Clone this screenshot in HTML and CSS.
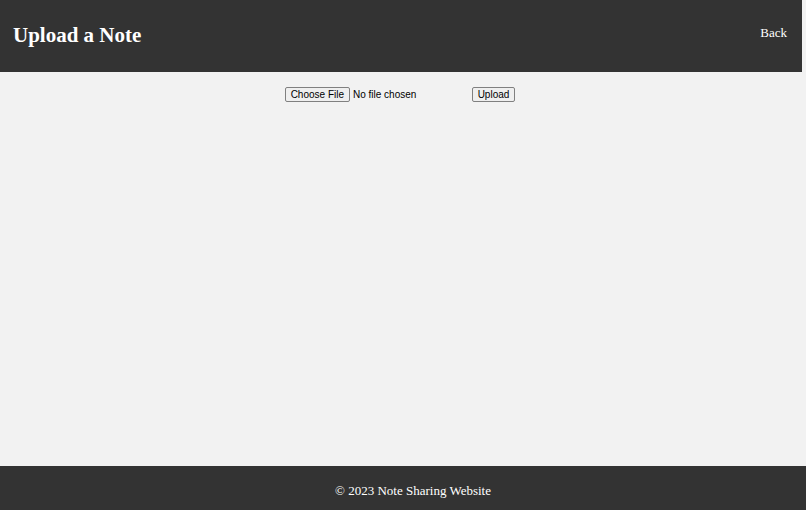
FILE: index.html
```html
<!DOCTYPE html>
<html lang="en">
<head>
	<meta charset="UTF-8">
	<title>Upload a Note</title>
	<link rel="stylesheet" href="styles.css">
</head>
<body>
	<header class="top">
		<h1>Upload a Note</h1>
		<a href="#" class="back">Back</a>
	</header>
	<main class="content">
		<form class="upload" action="#" method="post" enctype="multipart/form-data">
			<input type="file" name="note">
			<button type="submit">Upload</button>
		</form>
	</main>
	<footer class="bottom">
		<p>&copy; 2023 Note Sharing Website</p>
	</footer>
</body>
</html>
```

FILE: styles.css
```css
* {
    margin: 0;
    padding: 0;
    box-sizing: border-box;
}
html, body {
    height: 100%;
}
body {
    display: flex;
    flex-direction: column;
    background: #f2f2f2;
    font-family: "Liberation Serif", Georgia, serif;
}
.top {
    height: 72px;
    margin-right: 4px;
    background: #333;
    color: #fff;
    display: flex;
    align-items: center;
    justify-content: space-between;
    padding: 0 15px 0 13px;
}
.top h1 {
    font-size: 21px;
    font-weight: bold;
    margin-top: -2px;
}
.back {
    color: #fff;
    text-decoration: none;
    font-size: 13px;
    margin-top: -7px;
}
.content {
    flex: 1;
    padding-top: 15px;
}
.upload {
    display: flex;
    justify-content: center;
    align-items: center;
    gap: 4px;
    padding-right: 6px;
}
.upload input {
    width: 183px;
    font-size: 10px;
    font-family: "Liberation Sans", Arial, sans-serif;
    color: #000;
}
.upload input::file-selector-button,
.upload button {
    height: 15px;
    padding: 0 5px;
    margin-right: 3px;
    font-size: 10px;
    font-family: "Liberation Sans", Arial, sans-serif;
    color: #000;
    background: #efefef;
    border: 1px solid #808080;
    border-radius: 2px;
}
.upload button {
    margin-right: 0;
    padding: 0 5px;
}
.bottom {
    height: 44px;
    background: #333;
    color: #fff;
    display: flex;
    align-items: center;
    justify-content: center;
    font-size: 13px;
    padding: 6px 0 0 20px;
}
```
